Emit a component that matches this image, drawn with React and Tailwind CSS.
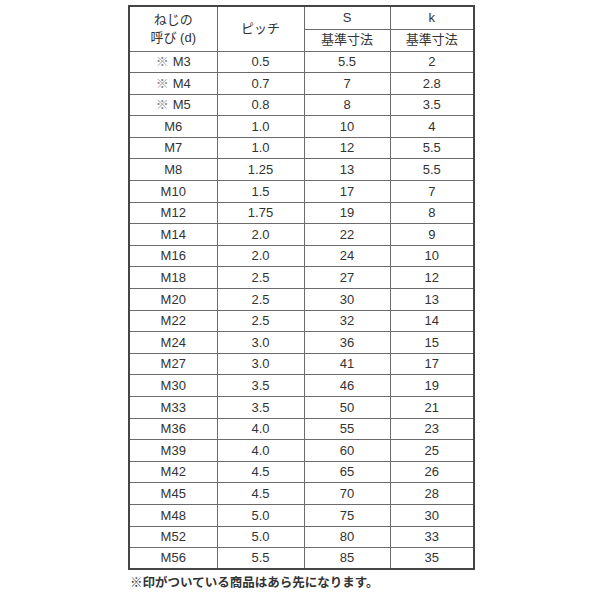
import React from "react";

const rows = [
  ["※", "M3", "0.5", "5.5", "2"],
  ["※", "M4", "0.7", "7", "2.8"],
  ["※", "M5", "0.8", "8", "3.5"],
  ["", "M6", "1.0", "10", "4"],
  ["", "M7", "1.0", "12", "5.5"],
  ["", "M8", "1.25", "13", "5.5"],
  ["", "M10", "1.5", "17", "7"],
  ["", "M12", "1.75", "19", "8"],
  ["", "M14", "2.0", "22", "9"],
  ["", "M16", "2.0", "24", "10"],
  ["", "M18", "2.5", "27", "12"],
  ["", "M20", "2.5", "30", "13"],
  ["", "M22", "2.5", "32", "14"],
  ["", "M24", "3.0", "36", "15"],
  ["", "M27", "3.0", "41", "17"],
  ["", "M30", "3.5", "46", "19"],
  ["", "M33", "3.5", "50", "21"],
  ["", "M36", "4.0", "55", "23"],
  ["", "M39", "4.0", "60", "25"],
  ["", "M42", "4.5", "65", "26"],
  ["", "M45", "4.5", "70", "28"],
  ["", "M48", "5.0", "75", "30"],
  ["", "M52", "5.0", "80", "33"],
  ["", "M56", "5.5", "85", "35"],
];

const cell = "border border-[#6b6b6b] text-center align-middle p-0";

export default function App() {
  return (
    <div className="w-[600px] h-[600px] bg-white text-[#333] text-[13px]">
      <div className="pl-[128px] pt-[5px] [font-family:'Liberation_Sans','Noto_Sans_CJK_JP',sans-serif]">
        <table className="border-collapse border-2 border-[#454545] w-[345px] table-fixed">
          <colgroup>
            <col className="w-[88px]" />
            <col className="w-[87px]" />
            <col className="w-[86px]" />
            <col className="w-[84px]" />
          </colgroup>
          <thead>
            <tr className="h-[23px]">
              <td rowSpan={2} className={`${cell} leading-[18px] pt-[1px]`}>
                ねじの
                <br />
                呼び (d)
              </td>
              <td rowSpan={2} className={cell}>
                ピッチ
              </td>
              <td className={cell}>S</td>
              <td className={cell}>k</td>
            </tr>
            <tr className="h-[22px]">
              <td className={cell}>基準寸法</td>
              <td className={cell}>基準寸法</td>
            </tr>
          </thead>
          <tbody>
            {rows.map((r, i) => (
              <tr key={i} className="h-[21.6px]">
                <td className={cell}>
                  {r[0] && <span className="text-[#888] mr-[4px]">{r[0]}</span>}
                  {r[1]}
                </td>
                <td className={cell}>{r[2]}</td>
                <td className={cell}>{r[3]}</td>
                <td className={cell}>{r[4]}</td>
              </tr>
            ))}
          </tbody>
        </table>
        <div className="mt-[4px] ml-[2px] font-bold text-[12.5px] text-[#333]">
          ※印がついている商品はあら先になります。
        </div>
      </div>
    </div>
  );
}
